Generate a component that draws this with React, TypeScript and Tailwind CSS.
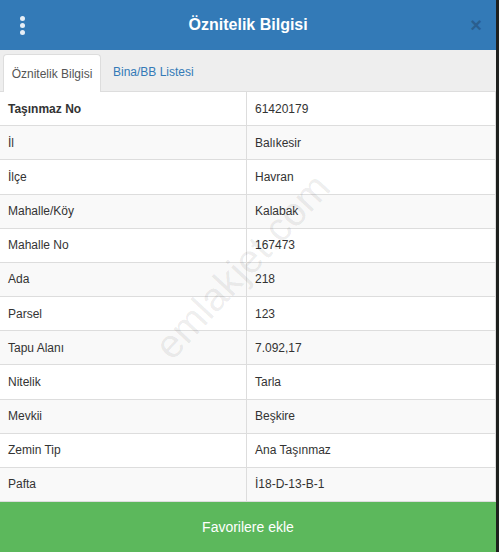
const rows: [string, string][] = [
  ["İl", "Balıkesir"],
  ["İlçe", "Havran"],
  ["Mahalle/Köy", "Kalabak"],
  ["Mahalle No", "167473"],
  ["Ada", "218"],
  ["Parsel", "123"],
  ["Tapu Alanı", "7.092,17"],
  ["Nitelik", "Tarla"],
  ["Mevkii", "Beşkire"],
  ["Zemin Tip", "Ana Taşınmaz"],
  ["Pafta", "İ18-D-13-B-1"],
];

export default function App() {
  return (
    <div className="flex h-[552px] w-[499px] bg-[#1e201e] font-['Liberation_Sans',Arial,sans-serif]">
      <div className="relative flex w-[496px] flex-col overflow-hidden bg-white">
        {/* header */}
        <div className="flex h-[50px] shrink-0 items-center bg-[#337ab7] pl-5 pr-[14px] text-white">
          <div className="flex w-[6px] flex-col gap-[2px]">
            <span className="h-[5px] w-[5px] rounded-full bg-[#e6eef6]" />
            <span className="h-[5px] w-[5px] rounded-full bg-[#e6eef6]" />
            <span className="h-[5px] w-[5px] rounded-full bg-[#e6eef6]" />
          </div>
          <h1 className="flex-1 text-center text-[16px] font-bold">Öznitelik Bilgisi</h1>
          <span className="text-[20px] font-bold leading-none text-[#2a5f8f]">×</span>
        </div>

        {/* tabs */}
        <div className="flex h-[42px] shrink-0 items-end border-b border-[#dddddd] bg-[#eeeeee] pl-[3px]">
          <div className="-mb-px flex h-[38px] w-[98px] items-center justify-center rounded-t-[4px] border border-b-0 border-[#dddddd] bg-white text-[12px] text-[#555]">
            Öznitelik Bilgisi
          </div>
          <div className="flex h-[38px] items-center px-3 text-[12px] text-[#337ab7]">Bina/BB Listesi</div>
        </div>

        {/* table */}
        <div className="flex flex-1 flex-col border-r border-[#dddddd] text-[12px] text-[#333]">
          <div className="flex flex-1 items-center border-b border-[#dddddd] bg-white">
            <div className="flex h-full w-[247px] items-center border-r border-[#dddddd] pl-2 font-bold">Taşınmaz No</div>
            <div className="pl-2">61420179</div>
          </div>
          {rows.map(([k, v], i) => (
            <div
              key={k}
              className={`flex flex-1 items-center border-b border-[#dddddd] ${i % 2 === 0 ? "bg-[#f9f9f9]" : "bg-white"}`}
            >
              <div className="flex h-full w-[247px] items-center border-r border-[#dddddd] pl-2">{k}</div>
              <div className="pl-2">{v}</div>
            </div>
          ))}
        </div>

        {/* watermark */}
        <div className="pointer-events-none absolute left-[242px] top-[266px] -translate-x-1/2 -translate-y-1/2 -rotate-[47deg] whitespace-nowrap text-[40px] text-black/[0.08]">
          emlakjet.com
        </div>

        <button className="h-[50px] w-full shrink-0 bg-[#5cb85c] text-[14px] text-white">Favorilere ekle</button>
      </div>
    </div>
  );
}
